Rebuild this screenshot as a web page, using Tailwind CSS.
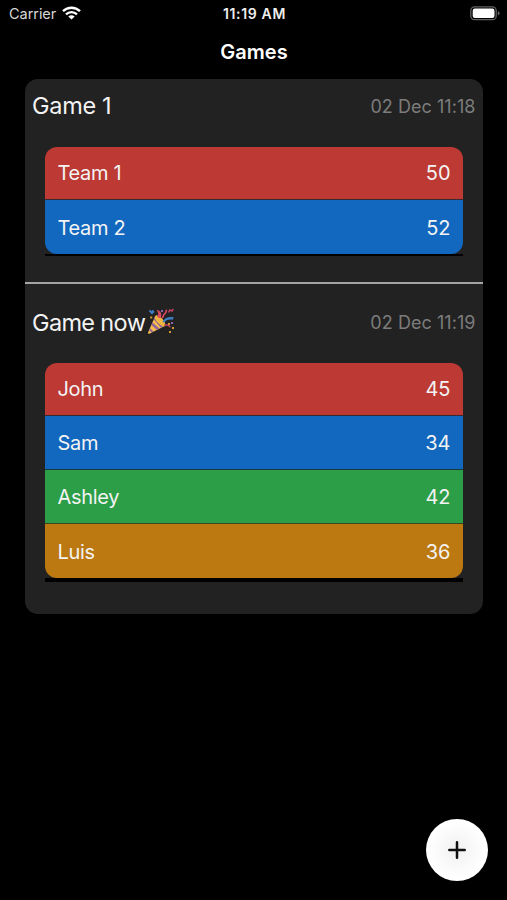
<!DOCTYPE html>
<html lang="en">
<head>
<meta charset="utf-8">
<title>Games</title>
<script src="https://cdn.jsdelivr.net/npm/@tailwindcss/browser@4"></script>
</head>
<body class="bg-black">
<main class="relative h-[900px] w-[507px] overflow-hidden bg-black font-['Inter',sans-serif] text-[#f3f3f3]">
  <header>
    <div class="grid h-7 grid-cols-3 items-center pl-[9px] pr-[7px] text-[14.5px] leading-7">
      <div class="flex items-center gap-[6px] text-[#d6d6d6]">
        <span class="tracking-[-0.05px]">Carrier</span>
        <svg class="-mt-[2px] h-[14px] w-[19px]" viewBox="0 0 19 14" fill="none" stroke="#fff" stroke-width="2.4">
          <path d="M1 5.2C5.8.6 13.2.6 18 5.2M4 8.3c3.1-2.9 7.9-2.9 11 0"/>
          <path d="M9.5 13.6 6.3 10.5c1.8-1.6 4.6-1.6 6.4 0z" fill="#fff" stroke="none"/>
        </svg>
      </div>
      <span class="whitespace-nowrap text-center text-[14px] font-semibold tracking-[0.65px] text-[#eee]">11:19 AM</span>
      <svg class="-mt-[2px] h-[15px] w-[31px] translate-x-px justify-self-end" viewBox="0 0 31 15">
        <rect x=".8" y=".8" width="25.4" height="12.9" rx="3.8" fill="none" stroke="#626262" stroke-width="1.3"/>
        <rect x="2.7" y="2.6" width="21.8" height="9.3" rx="2.2" fill="#fff"/>
        <path d="M27.8 5c2.5.8 2.5 3.7 0 4.5z" fill="#626262"/>
      </svg>
    </div>
    <h1 class="h-[51px] pl-px text-center text-[20px] font-semibold leading-[49px] text-white">Games</h1>
  </header>

  <div class="ml-[25px] h-[535px] w-[457.5px] rounded-[13px] bg-[#222]">
    <section class="h-[204.5px] border-b-2 border-[#a5a5a5]">
      <div class="flex h-[68px] items-start justify-between pl-[7px] pr-[7px]">
        <h2 class="text-[23.5px] leading-[53px] tracking-[-0.3px]">Game 1</h2>
        <time class="text-[18px] leading-[55px] tracking-[0.05px] text-[#7c7c7c]">02 Dec 11:18</time>
      </div>
      <div class="ml-5 w-[418px] border-b-[2.5px] border-black text-[20px] tracking-[-0.3px]">
        <div class="overflow-hidden rounded-[12px]">
          <div class="flex h-[53px] items-center justify-between border-b border-[#372b31] bg-[#bc3a33] px-[12.5px]"><span>Team 1</span><span class="tracking-normal">50</span></div>
          <div class="flex h-[54px] items-center justify-between bg-[#1267be] px-[12.5px] pt-px"><span>Team 2</span><span class="tracking-normal">52</span></div>
        </div>
      </div>
    </section>
    <section>
      <div class="flex h-[79.5px] items-start justify-between pl-[7px] pr-[7px]">
        <h2 class="flex text-[23.5px] leading-[77px] tracking-[-0.65px]"><span>Game now</span>
          <svg class="ml-[2px] mt-[23px] h-[28px] w-[29px]" viewBox="0 0 29 28" role="img" aria-label="party popper">
            <path d="M1.2 25.3 8 9.4c3.7 1.3 8.8 6.2 9.8 9.6L2.4 26.7c-1 .4-1.7-.4-1.2-1.4z" fill="#f6bf4c"/>
            <path d="m5.4 15.4 7 6.2-2.4 1.3-5.8-5zM7.6 10.4l8.3 9.3-2.1 1.1-7-8.2zM3 21.1l3.5 3.5-2 1-2.3-2.4z" fill="#92649b"/>
            <ellipse cx="13.1" cy="13.8" rx="3" ry="7" transform="rotate(-43 13.1 13.8)" fill="#f0b73f"/>
            <path d="M10 10c1.7-2.2 1.5-4.2-.3-7.3 4.3.9 5.7 4.4 3.7 8.8" fill="#d74b61"/>
            <path d="M15.5 14.5c2.3-3.7 6.3-5 11.2-4.2l-.8 2.4c-4-.8-6.4.1-9 3.1" fill="#3d7ec4"/>
            <path d="M15 11c2.3-2.2.8-3.2 2.8-4.3 1.7-1 .8-2.5 2-3.8" fill="none" stroke="#dd4660" stroke-width="1.7"/>
            <path d="m2.4 3.3 3.2 3.5m-.4-3.4 1.6 2.2" stroke="#3d82c9" stroke-width="1.8"/>
            <path d="m21.5 5.5 1.4-2.5 2.2 1.1 1.1-2.2M17.2 17.8l4 .5 2.2 2" fill="none" stroke="#c74362" stroke-width="1.5"/>
            <path d="M3.2 9.5h2v2h-2zM21 16h2v2h-2zM25 20h2v2h-2zM22 24h2v2h-2z" fill="#d49a30"/>
            <path d="M14 3h2v2h-2zM24 15h2v2h-2z" fill="#945eb1"/>
          </svg>
        </h2>
        <time class="text-[18px] leading-[78px] tracking-[0.05px] text-[#7c7c7c]">02 Dec 11:19</time>
      </div>
      <div class="ml-5 w-[418px] border-b-4 border-black text-[20px] tracking-[-0.3px]">
        <div class="overflow-hidden rounded-[12px]">
          <div class="flex h-[53px] items-center justify-between border-b border-[#372b31] bg-[#bc3a33] px-[12.5px]"><span>John</span><span class="tracking-normal">45</span></div>
          <div class="flex h-[54px] items-center justify-between border-b border-[#17393f] bg-[#1267be] px-[12.5px]"><span>Sam</span><span class="tracking-normal">34</span></div>
          <div class="flex h-[54px] items-center justify-between border-b border-[#3b4521] bg-[#2c9e47] px-[12.5px]"><span>Ashley</span><span class="tracking-normal">42</span></div>
          <div class="flex h-[54px] items-center justify-between bg-[#bc7911] px-[12.5px] pt-px"><span>Luis</span><span class="tracking-normal">36</span></div>
        </div>
      </div>
    </section>
  </div>

  <button aria-label="Add game" class="absolute left-[426px] top-[819px] flex size-[62px] items-center justify-center rounded-full bg-radial from-[#f1f1f1] to-white to-65%">
    <svg class="size-[18px]" viewBox="0 0 18 18" stroke="#111" stroke-width="2.5" stroke-linecap="round"><path d="M9 1.3v15.4M1.3 9h15.4"/></svg>
  </button>
</main>
</body>
</html>
